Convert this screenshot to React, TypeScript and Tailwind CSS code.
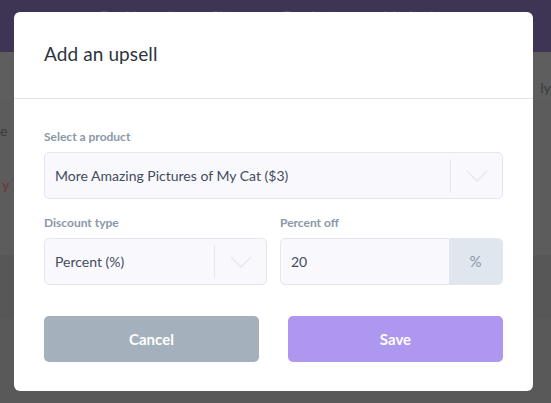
import React from 'react';

const Chevron = () => (
  <svg width="22" height="12" viewBox="0 0 22 12" fill="none">
    <path d="M1 1l10 10L21 1" stroke="#e6e7ee" strokeWidth="1.3" />
  </svg>
);

export default function App() {
  return (
    <div className="relative w-[551px] h-[403px] overflow-hidden bg-[#5a5a5a] font-['Lato',sans-serif]">
      {/* dimmed page behind the dialog */}
      <div className="flex flex-col h-full">
        <div className="h-[52px] bg-[#3d3553] shrink-0 flex items-start gap-10 pt-[9px] px-[100px] text-[15px] leading-none text-[#56506a]">
          <span>Dashboard</span>
          <span>Sites</span>
          <span className="font-bold">Products</span>
          <span>Marketing</span>
        </div>
        <div className="h-[48px] bg-[#5e5e5e] flex items-end justify-end pb-[2px] text-[14px] font-bold text-[#444]">
          <span>ly</span>
        </div>
        <div className="h-[155px] bg-[#5c5c5c] relative text-[14px]">
          <span className="absolute left-0 top-[20px] text-[#3a3a3a]">e</span>
          <span className="absolute left-[2px] top-[74px] text-[#6b3b3b] font-bold">y</span>
        </div>
        <div className="h-[63px] bg-[#575757]" />
        <div className="flex-1 bg-[#595959]" />
      </div>

      <div className="absolute left-[14px] top-[12px] w-[519px] h-[379px] bg-white rounded-[6px] flex flex-col">
        <div className="h-[87px] border-b border-[#e3e3e6] flex items-center px-[30px]">
          <h2 className="text-[19px] text-[#2d3340] tracking-[0.1px] -mt-[1px]">Add an upsell</h2>
        </div>
        <div className="px-[30px] pt-[32px]">
          <label className="block text-[12px] font-bold text-[#8a97a8] leading-none">Select a product</label>
          <div className="mt-[9px] h-[47px] rounded-[5px] border border-[#e4e5ee] bg-[#f9f9fd] flex items-center">
            <span className="flex-1 pl-[10px] text-[14px] text-[#434b5c]">More Amazing Pictures of My Cat ($3)</span>
            <div className="w-px h-[34px] bg-[#e4e5ee]" />
            <div className="w-[51px] flex justify-center"><Chevron /></div>
          </div>

          <div className="mt-[18px] grid grid-cols-[223px_223px] gap-[13px]">
            <div>
              <label className="block text-[12px] font-bold text-[#8a97a8] leading-none">Discount type</label>
              <div className="mt-[9px] h-[47px] rounded-[5px] border border-[#e4e5ee] bg-[#f9f9fd] flex items-center">
                <span className="flex-1 pl-[10px] text-[14px] text-[#434b5c]">Percent (%)</span>
                <div className="w-px h-[34px] bg-[#e4e5ee]" />
                <div className="w-[51px] flex justify-center"><Chevron /></div>
              </div>
            </div>
            <div>
              <label className="block text-[12px] font-bold text-[#8a97a8] leading-none">Percent off</label>
              <div className="mt-[9px] h-[47px] rounded-[5px] border border-[#e4e5ee] bg-[#f9f9fd] flex items-stretch overflow-hidden">
                <span className="flex-1 pl-[10px] flex items-center text-[14px] text-[#434b5c]">20</span>
                <div className="w-[53px] bg-[#e0e6ee] flex items-center justify-center text-[15px] text-[#8a97a8]">%</div>
              </div>
            </div>
          </div>

          <div className="mt-[31px] flex justify-between">
            <button className="w-[215px] h-[46px] rounded-[5px] bg-[#a4b1bd] text-white font-bold text-[15px]">Cancel</button>
            <button className="w-[215px] h-[46px] rounded-[5px] bg-[#ae97ef] text-white font-bold text-[15px]">Save</button>
          </div>
        </div>
      </div>
    </div>
  );
}
